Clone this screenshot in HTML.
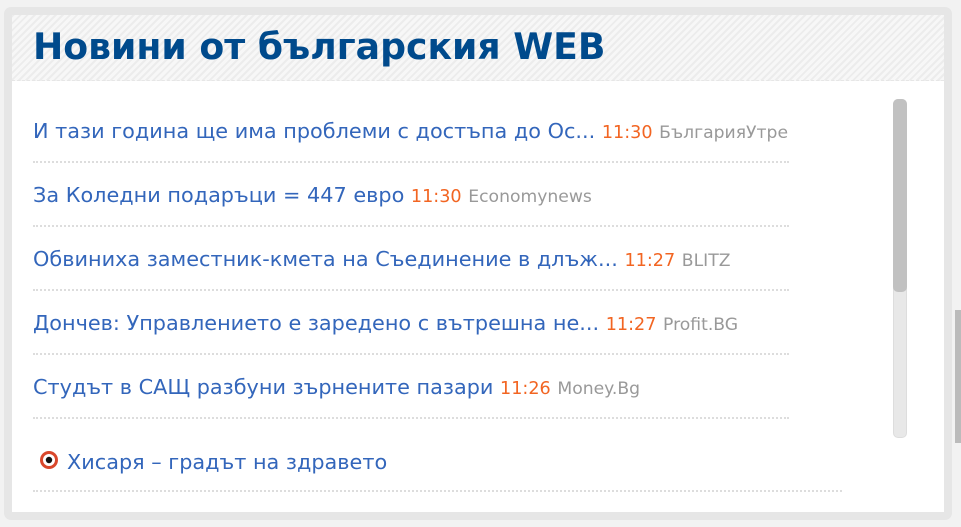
<!DOCTYPE html>
<html><head><meta charset="utf-8"><style>
body{margin:0;width:961px;height:527px;background:#f2f2f2;position:relative;overflow:hidden;font-family:"DejaVu Sans",Verdana,sans-serif}
.box{position:absolute;left:4px;top:7px;width:948px;height:513px;background:#e6e6e6;border-radius:7px}
.in{position:absolute;left:12px;top:15px;width:932px;height:497px;background:#fff}
.hd{position:absolute;left:12px;top:15px;width:932px;height:65px;background:repeating-linear-gradient(135deg,#ececec 0 2px,#f7f7f7 2px 5px);border-bottom:1px dashed #e6e6e6}
.hd h1{margin:0;position:absolute;left:21px;top:10px;font-size:36.2px;font-weight:bold;color:#004a8c;white-space:nowrap;line-height:44px}
.it{position:absolute;left:33px;width:756px;height:0;border-bottom:2px dotted #ddd}
.t{position:absolute;left:33px;font-size:20.8px;color:#3366bb;white-space:nowrap;line-height:24px}
.tm{color:#f26522;font-size:17.6px}
.src{color:#999;font-size:17.2px}
.sb{position:absolute;left:893px;top:99px;width:14px;height:339px;background:#e8e8e8;border-radius:5px;border:1px solid #ddd;box-sizing:border-box}
.th{position:absolute;left:893px;top:99px;width:14px;height:193px;background:#c1c1c1;border-radius:5px}
.ps{position:absolute;left:955px;top:310px;width:6px;height:133px;background:#bbb}
</style></head><body>
<div class="box"></div><div class="in"></div>
<div class="hd"><h1>Новини от българския WEB</h1></div>
<div class="t" style="top:119px">И тази година ще има проблеми с достъпа до Ос... <span class="tm">11:30</span> <span class="src">БългарияУтре</span></div>
<div class="it" style="top:161px"></div>
<div class="t" style="top:183px">За Коледни подаръци = 447 евро <span class="tm">11:30</span> <span class="src">Economynews</span></div>
<div class="it" style="top:225px"></div>
<div class="t" style="top:247px">Обвиниха заместник-кмета на Съединение в длъж... <span class="tm">11:27</span> <span class="src">BLITZ</span></div>
<div class="it" style="top:289px"></div>
<div class="t" style="top:311px">Дончев: Управлението е заредено с вътрешна не... <span class="tm">11:27</span> <span class="src">Profit.BG</span></div>
<div class="it" style="top:353px"></div>
<div class="t" style="top:375px">Студът в САЩ разбуни зърнените пазари <span class="tm">11:26</span> <span class="src">Money.Bg</span></div>
<div class="it" style="top:417px"></div>
<svg style="position:absolute;left:38px;top:449px" width="22" height="22" viewBox="0 0 22 22"><circle cx="11" cy="11" r="9" fill="#d9472b"/><circle cx="11" cy="11" r="6" fill="#fff"/><circle cx="11" cy="11" r="3.2" fill="#111"/></svg>
<div class="t" style="top:450px;left:67px">Хисаря – градът на здравето</div>
<div class="it" style="top:490px;width:809px"></div>
<div class="sb"></div><div class="th"></div>
<div class="ps"></div>
</body></html>
